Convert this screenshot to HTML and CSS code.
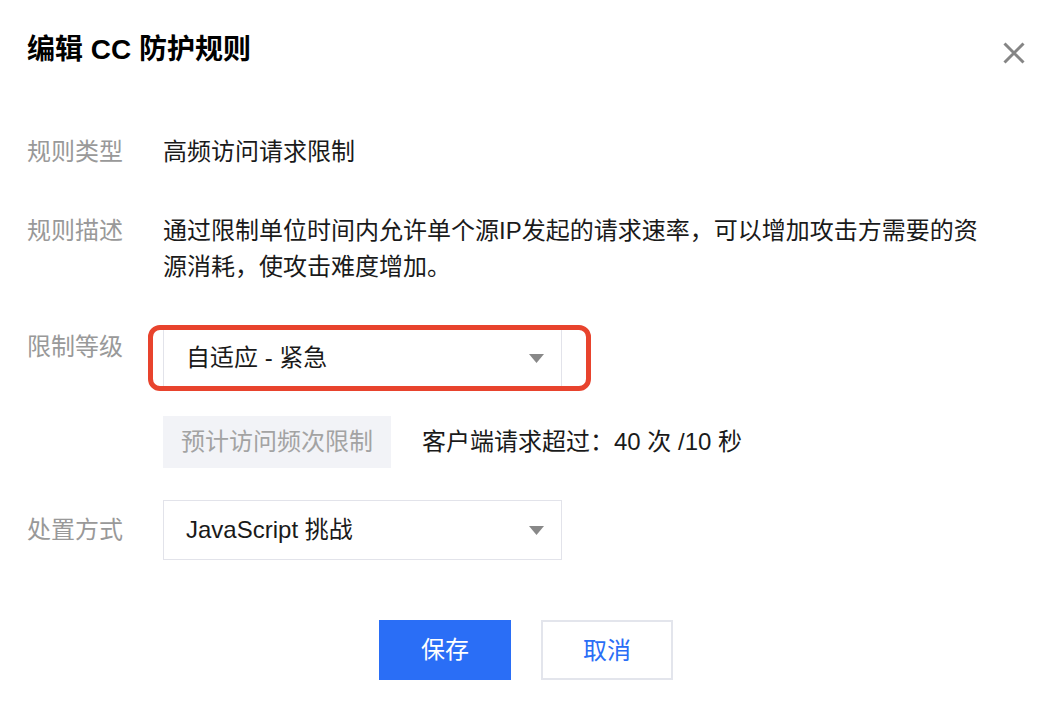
FILE: index.html
```html
<!DOCTYPE html>
<html lang="zh-CN">
<head>
  <meta charset="UTF-8">
  <title>编辑 CC 防护规则</title>
  <link rel="stylesheet" href="styles.css">
</head>
<body>
  <div class="dialog">
    <div class="dialog-header">
      <h2 class="dialog-title">编辑 CC 防护规则</h2>
      <button class="dialog-close" type="button" aria-label="关闭">
        <svg width="22" height="22" viewBox="0 0 22 22">
          <path d="M1.5 1.5L20.5 20.5M20.5 1.5L1.5 20.5" stroke="#858585" stroke-width="3" fill="none"/>
        </svg>
      </button>
    </div>

    <div class="form">
      <div class="form-row">
        <label class="form-label">规则类型</label>
        <div class="form-value">高频访问请求限制</div>
      </div>

      <div class="form-row row-desc">
        <label class="form-label">规则描述</label>
        <div class="form-value desc">通过限制单位时间内允许单个源IP发起的请求速率，可以增加攻击方需要的资源消耗，使攻击难度增加。</div>
      </div>

      <div class="form-row row-level">
        <label class="form-label">限制等级</label>
        <div class="form-control">
          <div class="select">
            <span>自适应 - 紧急</span>
            <svg class="caret" width="15" height="9" viewBox="0 0 15 9"><path d="M0 0H15L7.5 9Z" fill="#888"/></svg>
          </div>
          <div class="highlight"></div>
        </div>
      </div>

      <div class="form-row row-sub">
        <span class="form-label"></span>
        <div class="form-value estimate">
          <span class="tag">预计访问频次限制</span>
          <span class="estimate-text">客户端请求超过：40 次 /10 秒</span>
        </div>
      </div>

      <div class="form-row row-action">
        <label class="form-label">处置方式</label>
        <div class="form-control">
          <div class="select">
            <span>JavaScript 挑战</span>
            <svg class="caret" width="15" height="9" viewBox="0 0 15 9"><path d="M0 0H15L7.5 9Z" fill="#888"/></svg>
          </div>
        </div>
      </div>
    </div>

    <div class="dialog-footer">
      <button class="btn btn-primary" type="button">保存</button>
      <button class="btn btn-default" type="button">取消</button>
    </div>
  </div>
</body>
</html>
```

FILE: styles.css
```css
body {
  margin: 0;
  padding: 0;
  background-color: #ffffff;
  font-family: "Liberation Sans", "Noto Sans CJK SC", sans-serif;
  color: #1a1a1a;
}

.dialog {
  padding: 30px 13px 0 27px;
}

.dialog-header {
  display: flex;
  align-items: center;
  justify-content: space-between;
  height: 40px;
}

.dialog-title {
  margin: 0;
  font-size: 28px;
  line-height: 40px;
  font-weight: bold;
  color: #000;
}

.dialog-close {
  margin-top: 6px;
  padding: 0;
  border: none;
  background: none;
  width: 22px;
  height: 22px;
  cursor: pointer;
}

.dialog-close svg {
  display: block;
}

.form {
  margin-top: 64px;
}

.form-row {
  display: flex;
  align-items: flex-start;
  font-size: 24px;
  line-height: 36px;
}

.form-label {
  flex: 0 0 136px;
  color: #999;
}

.form-value {
  color: #1a1a1a;
}

.row-desc {
  margin-top: 43px;
}

.desc {
  max-width: 825px;
}

.row-level {
  margin-top: 43px;
}

.row-level .form-label {
  padding-top: 1px;
}

.form-control {
  position: relative;
}

.select {
  display: flex;
  align-items: center;
  justify-content: space-between;
  box-sizing: border-box;
  width: 399px;
  height: 60px;
  padding: 0 17px 0 22px;
  border: 1px solid #e2e3ea;
  background: #fff;
  color: #1a1a1a;
}

.caret {
  display: block;
}

.highlight {
  position: absolute;
  left: -15px;
  top: -3px;
  width: 443px;
  height: 66px;
  box-sizing: border-box;
  border: 5px solid #e8432d;
  border-radius: 12px;
}

.row-sub {
  margin-top: 28px;
}

.estimate {
  display: flex;
  align-items: center;
}

.tag {
  display: inline-block;
  height: 52px;
  line-height: 52px;
  padding: 0 18px;
  background-color: #f2f3f7;
  color: #a3a3a3;
}

.estimate-text {
  margin-left: 31px;
  color: #1a1a1a;
}

.row-action {
  margin-top: 32px;
  align-items: center;
}

.dialog-footer {
  display: flex;
  justify-content: center;
  gap: 30px;
  margin-top: 60px;
}

.btn {
  width: 132px;
  height: 60px;
  font-family: inherit;
  font-size: 24px;
  line-height: 56px;
  cursor: pointer;
}

.btn-primary {
  border: none;
  background-color: #2a6ef6;
  color: #fff;
}

.btn-default {
  border: 2px solid #e3e5ec;
  background-color: #fff;
  color: #2a6ef6;
}
```
